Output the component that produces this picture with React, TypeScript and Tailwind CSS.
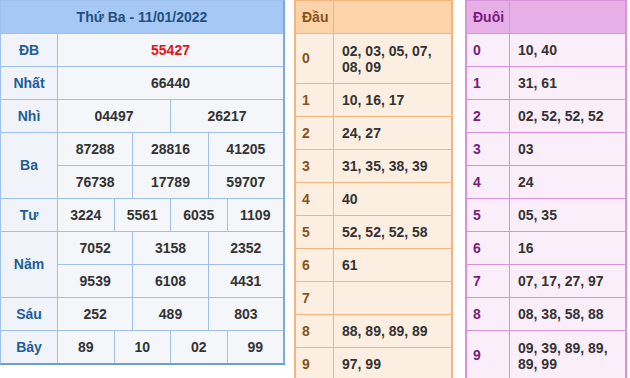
import { Fragment } from 'react';

const prizes = [
  { label: 'ĐB', lines: [['55427']], special: true },
  { label: 'Nhất', lines: [['66440']] },
  { label: 'Nhì', lines: [['04497', '26217']] },
  { label: 'Ba', lines: [['87288', '28816', '41205'], ['76738', '17789', '59707']] },
  { label: 'Tư', lines: [['3224', '5561', '6035', '1109']] },
  { label: 'Năm', lines: [['7052', '3158', '2352'], ['9539', '6108', '4431']] },
  { label: 'Sáu', lines: [['252', '489', '803']] },
  { label: 'Bảy', lines: [['89', '10', '02', '99']] },
];

const spans: Record<number, string> = {
  1: 'col-span-12',
  2: 'col-span-6',
  3: 'col-span-4',
  4: 'col-span-3',
};

const dau = [
  ['0', '02, 03, 05, 07, 08, 09'],
  ['1', '10, 16, 17'],
  ['2', '24, 27'],
  ['3', '31, 35, 38, 39'],
  ['4', '40'],
  ['5', '52, 52, 52, 58'],
  ['6', '61'],
  ['7', ''],
  ['8', '88, 89, 89, 89'],
  ['9', '97, 99'],
];

const duoi = [
  ['0', '10, 40'],
  ['1', '31, 61'],
  ['2', '02, 52, 52, 52'],
  ['3', '03'],
  ['4', '24'],
  ['5', '05, 35'],
  ['6', '16'],
  ['7', '07, 17, 27, 97'],
  ['8', '08, 38, 58, 88'],
  ['9', '09, 39, 89, 89, 89, 99'],
];

function ResultTable() {
  return (
    <div className="w-[285px] shrink-0 grid grid-cols-[56px_repeat(12,minmax(0,1fr))] auto-rows-[32px] gap-px bg-[#9fc0e9] border-l border-t border-r-2 border-b-2 border-l-[#9fc0e9] border-t-[#9fc0e9] border-r-[#7fa8dd] border-b-[#6f9cd6]">
      <div className="col-span-13 flex items-center justify-center bg-[#a6c8f4] text-[14px] font-bold text-[#23507f]">
        Thứ Ba - 11/01/2022
      </div>
      {prizes.map((p) => (
        <Fragment key={p.label}>
          <div
            className={`flex items-center justify-center bg-[#f0f4fa] text-[14px] font-bold text-[#225c98] ${
              p.lines.length > 1 ? 'row-span-2' : ''
            }`}
          >
            {p.label}
          </div>
          {p.lines.map((line, i) =>
            line.map((n, j) => (
              <div
                key={`${i}-${j}`}
                className={`${spans[line.length]} flex items-center justify-center bg-[#f4f6f9] text-[14px] font-bold ${
                  p.special ? 'text-[#e3141b]' : 'text-[#333333]'
                }`}
              >
                {n}
              </div>
            ))
          )}
        </Fragment>
      ))}
    </div>
  );
}

type LotoProps = {
  title: string;
  rows: string[][];
  frame: string;
  headBg: string;
  bodyBg: string;
  labelColor: string;
};

function LotoTable({ title, rows, frame, headBg, bodyBg, labelColor }: LotoProps) {
  return (
    <div className={`shrink-0 grid gap-px border-x-2 border-t ${frame}`}>
      <div className={`flex items-center pl-1.5 text-[14px] font-bold ${headBg} ${labelColor}`}>{title}</div>
      <div className={headBg} />
      {rows.map(([k, v]) => (
        <Fragment key={k}>
          <div className={`flex items-center pl-1.5 text-[14px] font-bold ${bodyBg} ${labelColor}`}>{k}</div>
          <div className={`flex items-center pl-2 pr-1 text-[14px] font-bold leading-4 text-[#333333] ${bodyBg}`}>
            {v}
          </div>
        </Fragment>
      ))}
    </div>
  );
}

export default function App() {
  return (
    <div className="w-[630px] h-[378px] overflow-hidden bg-white flex items-start font-['Liberation_Sans',Arial,sans-serif]">
      <ResultTable />
      <div className="ml-[9px]">
        <LotoTable
          title="Đầu"
          rows={dau}
          frame="w-[159px] grid-cols-[37px_1fr] grid-rows-[32px_49px_repeat(9,32px)] bg-[#f3b47d] border-[#f3b47d]"
          headBg="bg-[#fdd3ab]"
          bodyBg="bg-[#fdeee2]"
          labelColor="text-[#87541a]"
        />
      </div>
      <div className="ml-[12px]">
        <LotoTable
          title="Đuôi"
          rows={duoi}
          frame="w-[162px] grid-cols-[42px_1fr] grid-rows-[32px_repeat(9,32px)_49px] bg-[#d993d9] border-[#d993d9]"
          headBg="bg-[#e7afe7]"
          bodyBg="bg-[#fbeefb]"
          labelColor="text-[#7b1c7b]"
        />
      </div>
    </div>
  );
}
